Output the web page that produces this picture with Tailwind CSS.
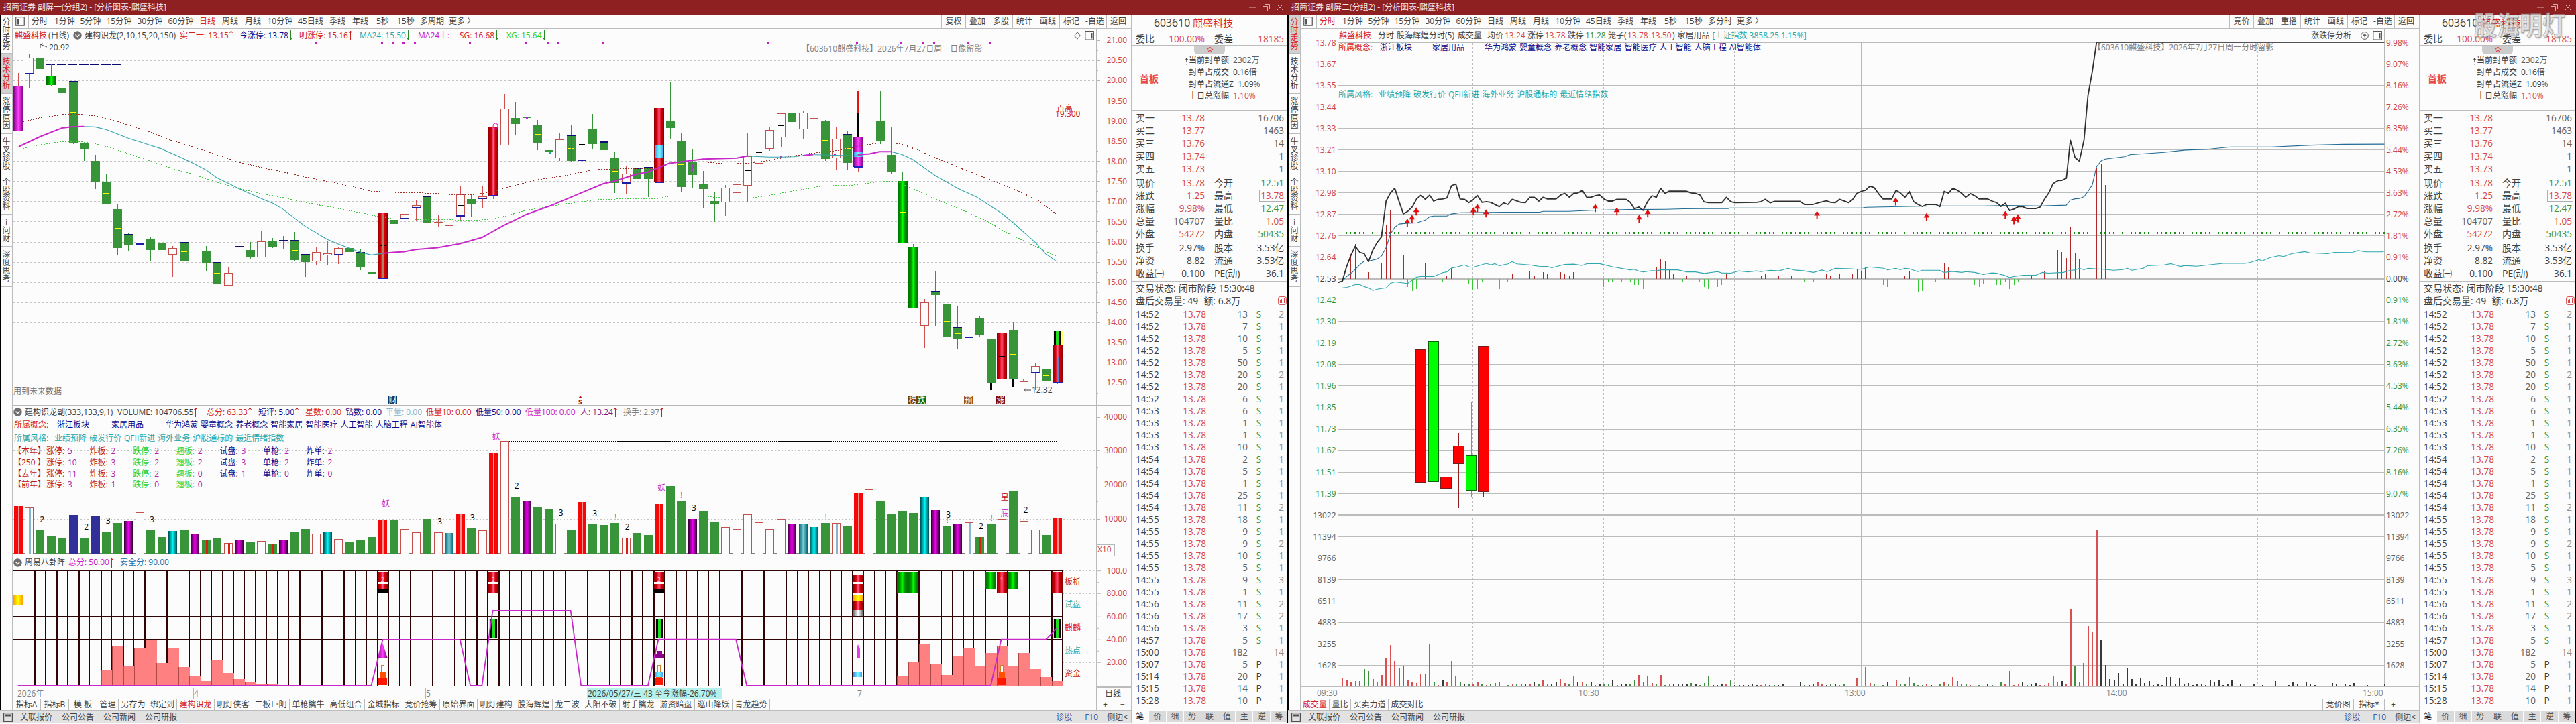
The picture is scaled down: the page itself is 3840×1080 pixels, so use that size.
<!DOCTYPE html>
<html lang="zh-CN">
<head>
    <meta charset="UTF-8">
    <meta name="viewport" content="width=device-width, initial-scale=1.0">
    <title>招商证券</title>
    <script src="https://cdn.jsdelivr.net/npm/@tailwindcss/browser@4"></script>
</head>
<body class="bg-black">
    <div id="desk" class="flex w-[3840px] h-[1080px] overflow-hidden text-[12px] leading-none text-[#404040] whitespace-nowrap font-['Open_Sans','Noto_Sans_CJK_SC',sans-serif]"></div>

    <script>
        // ---------- small builders ----------
        const txt = (x, y, s, cls = 'fill-[#404040]', anchor = 'start') =>
            `<text x="${x}" y="${y + 4.4}" class="${cls}" text-anchor="${anchor}" xml:space="preserve">${s}</text>`;
        const rect = (x, y, w, h, fill, extra = '') => `<rect x="${x}" y="${y}" width="${w}" height="${h}" fill="${fill}" ${extra}/>`;
        const line = (x1, y1, x2, y2, c, w = 1, dash = '') =>
            `<line x1="${x1}" y1="${y1}" x2="${x2}" y2="${y2}" stroke="${c}" stroke-width="${w}" ${dash ? `stroke-dasharray="${dash}"` : ''}/>`;
        const poly = (pts, c, w = 1, dash = '') =>
            `<polyline points="${pts}" fill="none" stroke="${c}" stroke-width="${w}" stroke-linejoin="round" ${dash ? `stroke-dasharray="${dash}"` : ''}/>`;

        const up = `<svg class="w-[7px] h-[15px]" viewBox="0 0 7 15"><path d="M3.5 15V1M1.5 4L3.5 1L5.5 4" fill="none" stroke="#d02020"/></svg>`;
        const down = `<svg class="w-[7px] h-[15px]" viewBox="0 0 7 15"><path d="M3.5 0V14M1.5 11L3.5 14L5.5 11" fill="none" stroke="#2a8a2a"/></svg>`;
        const knob = `<svg class="w-[13px] h-[13px]" viewBox="0 0 13 13"><circle cx="6.5" cy="6.5" r="6.2" fill="#6e6e6e"/><path d="M3.5 5.5L6.5 8.5L9.5 5.5" fill="none" stroke="#fff" stroke-width="1.3"/></svg>`;
        const dock = `<svg class="w-[14px] h-[14px]" viewBox="0 0 14 14"><path d="M.75 .75h12.5v12.5H.75z" fill="none" stroke="#555" stroke-width="1.3"/><path d="M9 3h2.5v8.5H9z" fill="#555"/></svg>`;

        // items: [left, class, html]; each one is as wide as the distance to the next
        function cells(items, start, end) {
            return items.map((it, i) => {
                const next = i + 1 < items.length ? items[i + 1][0] : end;
                const pad = i === 0 ? it[0] - start : 0;
                return `<span class="shrink-0 flex items-center ${it[1]}" style="width:${next - it[0]}px;margin-left:${pad}px">${it[2]}</span>`;
            }).join('');
        }

        const RED = 'text-[#d82020]', BLUE = 'text-[#0a0a8c]', TEAL = 'text-[#22a8ac]', MAG = 'text-[#c818c8]', LIME = 'text-[#28d028]';

        const gradients = `<defs>
            <linearGradient id="gR"><stop offset="0" stop-color="#8c0000"/><stop offset=".3" stop-color="#d80008"/><stop offset=".5" stop-color="#ff5a8c"/><stop offset=".7" stop-color="#d80008"/><stop offset="1" stop-color="#8c0000"/></linearGradient>
            <linearGradient id="gP"><stop offset="0" stop-color="#780078"/><stop offset=".5" stop-color="#ff40ff"/><stop offset="1" stop-color="#780078"/></linearGradient>
            <linearGradient id="gG"><stop offset="0" stop-color="#007000"/><stop offset=".25" stop-color="#009000"/><stop offset=".5" stop-color="#00ff00"/><stop offset=".75" stop-color="#009000"/><stop offset="1" stop-color="#007000"/></linearGradient>
            <linearGradient id="gC"><stop offset="0" stop-color="#004c50"/><stop offset=".5" stop-color="#00f4f4"/><stop offset="1" stop-color="#004c50"/></linearGradient>
            <linearGradient id="gT"><stop offset="0" stop-color="#006468"/><stop offset=".5" stop-color="#78c8d8"/><stop offset="1" stop-color="#006468"/></linearGradient>
            <linearGradient id="gV"><stop offset="0" stop-color="#2c002c"/><stop offset=".5" stop-color="#f000f0"/><stop offset="1" stop-color="#2c002c"/></linearGradient>
            <linearGradient id="gY"><stop offset="0" stop-color="#ff9c00"/><stop offset=".5" stop-color="#ffff00"/><stop offset="1" stop-color="#ff9c00"/></linearGradient>
            <linearGradient id="gS"><stop offset="0" stop-color="#606060"/><stop offset=".5" stop-color="#ffffff"/><stop offset="1" stop-color="#606060"/></linearGradient>
            <linearGradient id="gB"><stop offset="0" stop-color="#4890f0"/><stop offset=".5" stop-color="#70ffff"/><stop offset="1" stop-color="#4890f0"/></linearGradient>
        </defs>`;

        // ---------- daily chart ----------
        const X = v => +(v / 1.8667).toFixed(1);
        const Y = v => +(v / 2.6133).toFixed(1);
        const V = v => +(590 + v / 3).toFixed(1);
        const col = i => 26.5 + 16.48 * i;
        const path = (s, fy) => s.trim().split(/\s+/).map(p => { const [a, b] = p.split(','); return X(a) + ',' + fy(b); }).join(' ');

        // high, top, bottom, low, kind, middle mark. kinds: r/g plain, b = opening edge marked, R/P/G = shaded
        const days = [
            [285,335,511,511,'P',424],[209,225,287,345,'rb'],[168,225,269,298,'g'],[251,298,332,336,'G'],[332,345,361,416,'g'],
            [316,316,557,561,'gB',437],[555,559,580,627,'g'],[603,627,711,738,'g',670],[679,711,794,798,'g',753],[794,815,967,996,'g',891],
            [908,912,954,977,'gb'],[859,917,951,998,'rb'],[925,930,975,1019,'g'],[938,946,975,1009,'gb'],[959,967,992,1079,'r'],
            [896,943,1019,1040,'gb',981],[946,977,980,1004,'gb'],[959,980,1025,1056,'g'],[1022,1022,1105,1129,'gb',1064],[1040,1064,1111,1111,'r'],
            [959,959,963,1014,'gb'],[943,975,1001,1009,'g'],[899,941,1003,1003,'r'],[928,941,962,967,'g'],[920,936,940,970,'gb'],
            [904,936,1014,1019,'gb',975],[990,990,1022,1079,'gb'],[964,983,1018,1036,'rb'],[938,990,994,1036,'r'],[962,967,992,1030,'rb'],
            [962,967,983,1004,'g'],[970,983,1040,1053,'gb',1011],[1045,1061,1069,1110,'g'],[831,831,1086,1086,'R',957],[836,857,873,925,'g'],
            [813,834,851,881,'rb'],[781,802,809,862,'rb'],[742,766,868,893,'gb',819],[836,866,869,883,'rb'],[841,860,878,899,'r'],
            [724,760,841,857,'rb',800],[754,776,794,847,'g'],[724,766,775,810,'rb'],[497,497,762,775,'R',630],[366,424,566,566,'r',495],
            [397,460,483,525,'g'],[361,455,459,486,'gb'],[468,489,557,585,'g',524],[494,585,593,624,'g'],[517,546,616,626,'r'],
            [486,525,627,630,'gB',578],[444,502,625,694,'rb',562],[444,502,562,580,'g',534],[549,549,585,682,'gB'],[591,617,713,753,'g',667],
            [648,679,713,755,'rb'],[648,656,698,775,'gb'],[650,650,698,768,'gB'],[421,421,711,721,'R'],[318,470,499,541,'g'],
            [517,549,729,750,'g',641],[580,629,682,734,'gb'],[666,716,737,810,'g'],[747,783,794,865,'g'],[721,734,787,841,'rb'],
            [645,721,752,752,'r'],[517,611,723,787,'r',664],[517,549,636,664,'r',594],[494,507,580,588,'r'],[442,444,535,572,'r',489],
            [374,439,476,494,'gb'],[431,439,503,544,'r'],[410,460,472,494,'r'],[468,473,619,627,'g',547],[497,541,616,664,'rb'],
            [510,523,635,664,'gb',578],[533,533,651,671,'P'],[311,447,510,569,'rb'],[353,470,549,561,'g',510],[497,604,669,679,'g',638],
            [672,706,949,949,'G',826],[951,964,1202,1202,'G',1082],[1166,1181,1269,1356,'r',1224],[1056,1134,1150,1270,'gB'],[1178,1186,1315,1320,'g',1252],
            [1194,1276,1322,1359,'gb',1299],[1202,1241,1316,1367,'rb',1279],[1231,1239,1304,1315,'gb',1271],[1294,1320,1492,1492,'g',1407],[1296,1296,1478,1518,'R',1388],
            [1257,1286,1477,1477,'gb',1381],[1401,1469,1487,1525,'r'],[1414,1427,1452,1520,'rb'],[1367,1440,1487,1496,'g',1464],[1343,1343,1492,1497,'R',1391]
        ];

        function candle(d, i) {
            const [h, t, b, l, k, m] = d, c = Math.round(col(i)) + .5, y = Y(t), hh = Math.max(Y(b) - y, 1.5);
            const shaded = 'RPG'.includes(k[0]), green = k[0] === 'g' || k[0] === 'G';
            let s = line(c, Y(h), c, Y(l), green ? '#389438' : '#d05050');
            if (shaded) s += rect(c - 7.5, y, 15, hh, `url(#g${k[0]})`);
            else if (green) s += rect(c - 6.5, y, 13, hh, '#389438');
            else s += rect(c - 6, y, 12, hh, '#fcfcfc', 'stroke="#c4504c"');
            if (k[1] === 'B') s += rect(c - 6.5, y, 13, 2.5, '#0c0c78');
            if (k[1] === 'b') s += green ? rect(c - 6.5, y, 13, 1.3, '#10106c') : rect(c - 6.5, Y(b) - .6, 13, 1.3, '#1c1ca0');
            if (k === 'R' || k === 'P') s += rect(c - 7, Y(b) - 1, 14, 1.5, '#2020c0');
            if (m) s += rect(c - 4.5, Y(m) - .5, 9, 1, green ? '#ffff00' : '#000');
            return s;
        }

        const sg = `63,475 80,470 111,459 142,454 173,447 203,444 234,447 264,452 295,461 326,474 400,506 478,548 540,573 600,602 664,632 725,652 787,670 848,690 910,706 971,725 1033,745 1095,750 1217,754 1250,759 1320,758 1371,748 1433,722 1494,701 1568,686 1600,677 1649,662 1700,659 1832,656 1865,636 1895,631 1960,631 2020,639 2080,636 2140,626 2200,609 2260,597 2330,587 2387,571 2430,560 2480,557 2510,562 2560,588 2640,637 2700,671 2768,707 2830,742 2890,783 2941,836`;
        const xg = `56,582 111,565 170,553 234,554 264,560 300,572 356,598 420,628 480,657 541,681 602,710 664,735 725,755 787,770 848,789 941,813 1003,829 1065,848 1100,854 1200,855 1320,859 1371,853 1410,841 1464,820 1530,804 1568,796 1610,788 1670,777 1832,774 1865,764 1960,765 2010,772 2090,772 2140,762 2210,744 2290,725 2380,721 2430,711 2480,706 2500,711 2540,735 2602,775 2665,811 2740,857 2800,906 2870,953 2940,1000`;
        const maDown = [
            `234,493 264,495 295,505 356,538 417,566 449,580 510,618 541,639 575,664 602,692 633,713 664,735 725,773 760,793 787,815 848,881 910,933 941,951 971,967 1003,983 1033,994 1065,988`,
            `2078,608 2140,612 2170,612 2210,611 2250,603 2270,603 2380,607 2400,603`,
            `2480,591 2510,602 2540,622 2602,684 2665,734 2720,770 2787,831 2820,869 2880,944 2910,990 2940,1019`
        ];
        const maUp = [
            `52,572 111,533 173,499 203,494 234,493`,
            `1065,988 1095,984 1125,981 1156,973 1217,966 1280,950 1341,926 1400,880 1464,836 1530,803 1568,781 1610,756 1679,716 1710,706 1771,679 1802,671 1863,636 1893,631 1957,620 2050,616 2078,608`,
            `2235,606 2262,602`, `2387,603 2420,600 2448,591 2480,591`
        ];

        function dailyChart() {
            let s = gradients + '<g shape-rendering="crispEdges">';
            for (let k = 0; k <= 16; k++) s += line(20, 90.5 + k * 30.06, 1634, 90.5 + k * 30.06, '#c4c4c4', 1, '3 3');
            for (let k = -1; k <= 16; k++) {
                s += line(1635, 90.5 + k * 30.06, 1640, 90.5 + k * 30.06, '#b8b8b8');
                s += line(1635, 105.5 + k * 30.06, 1637, 105.5 + k * 30.06, '#b8b8b8');
            }
            s += line(1634.5, 62, 1634.5, 604, '#b8b8b8');
            s += line(X(127), Y(252), X(340), Y(252), '#0c0c70', 1, '14 2.5');
            s += line(X(1403), Y(424), X(2940), Y(424), '#c03030', 1, '2 1');
            s += days.map(candle).join('');
            s += poly(path(sg, Y), '#a03028', 1, '2 2') + poly(path(xg, Y), '#48c848', 1, '2 2');
            s += line(col(58) + .5, 65, col(58) + .5, 161, '#a828a8', 1, '4 2');
            s += rect(col(58) - 6, Y(565), 13, 19, 'url(#gB)') + rect(col(58) - 4, Y(565), 9, 1, '#000');
            s += rect(col(76) - 1, Y(353), 2.5, Y(441) - Y(353), '#e81010') + rect(col(76) - 1, Y(441), 2.5, Y(533) - Y(441), '#000');
            s += rect(col(76) - 6, Y(591), 13, 8, 'url(#gB)') + rect(col(76) - 4, Y(591), 9, 1, '#000');
            s += rect(col(50), Y(533), 2, 36, '#c020c0') + rect(col(61), Y(640), 2, 12, '#a040c0') + rect(col(61) + 1, Y(655), 1, 10, '#20a0c0');
            s += rect(col(88) - .5, Y(1492), 2.5, 11, '#000') + rect(col(90) - .5, Y(1477), 2.5, 13, '#000');
            s += rect(col(94) - 7, Y(1291), 15, 20, '#ffff60') + rect(col(94) - 5, Y(1291), 11, 20, '#000') + rect(col(94) - 2, Y(1291), 4, 20, '#20e020');
            s += rect(col(94), Y(1391), 2, 38, '#6080d0') + rect(col(33), Y(835), 2, 95, '#b08060') + rect(col(91) - 1, Y(1476), 2, 4, '#40a0d0');
            s += rect(col(46) - .5, Y(458), 3, 3, '#c020e0') + rect(col(48), Y(590), 3, 3, '#20a0b0');
            s += rect(X(2170) - 1, Y(609), 3, 3, '#c818c8') + rect(X(2323) - 1, Y(600), 3, 3, '#c818c8');
            s += [878,1063,1093,1123,1155,1307,1462,1524,1554,1677,2138,2385,2508,2569,2600,2692,2754].map(v => rect(X(v) - 1.5, 62, 3, 3, '#c818c8')).join('');
            s += '</g>';
            s += maDown.map(p => poly(path(p, Y), '#30a4ac', 1.1)).join('') + maUp.map(p => poly(path(p, Y), '#c828c8', 2)).join('');
            s += `<ellipse cx="738.5" cy="188" rx="3.5" ry="4" fill="none" stroke="#c818c8"/>`;
            s += `<path d="M60 66V72M60 66L64 65M60 66L70 70" fill="none" stroke="#404040"/>` + txt(73, 70.5, '20.92');
            s += `<path d="M1526 582H1537M1526 582L1529 580M1526 582L1529 584" fill="none" stroke="#404040"/>` + txt(1538, 582, '12.32');
            s += txt(1195, 73, '【603610麒盛科技】2026年7月27日周一日像留影', 'fill-[#808080]');
            s += txt(1575, 161.5, '百高', 'fill-[#d02020]') + txt(1573, 169.5, '19.300', 'fill-[#d02020]');
            s += txt(20, 583.5, '用到未来数据', 'fill-[#707070]');
            for (let k = -1; k <= 16; k++) s += txt(1680, 90 + k * 30.06, (20.5 - k * .5).toFixed(2), 'fill-[#d04444]', 'end');
            const tags = [[579, '#0c3c64', '财'], [1354, '#6c4010', '榜'], [1367, '#107010', '跌'], [1437, '#a05010', '预'], [1485, '#780808', '涨']];
            tags.forEach(([x, c, t]) => s += rect(x, 590, 13, 13, c) + txt(x + .5, 596.5, t, 'fill-white'));
            s += `<path d="M862 594L865 590L868 594z" fill="#c01010"/>` + txt(865, 599, 's', 'fill-[#c01010] font-bold', 'middle');
            return s;
        }

        // volume bars: top of bar and kind
        const vols = '495R 502b 603g 630g 636g 534B 636g 541B 609g 570g 561P 522r 603g 633g 606C 600g 618P 645x 639g 660y 648P 654g 652r 663x 645P 609g 597g 619r 612C 643r 654g 645g 633g 558R 558g 598r 613r 552g 613r 615T 531R 594g 604r 258R 205r 453g 471P 498g 510g 574r 603g 477R 576g 579g 570g 637y 615g 624g 486R 405g 471g 552P 516g 567g 589r 598r 532r 568r 598r 553r 573P 576T 588C 570g 571b 585g 435R 421r 474g 528g 516g 525g 453C 513P 582g 573P 568b 633x 573g 553r 429g 562r 601r 624g 546R'.split(' ');

        function volumeChart() {
            let s = '<g shape-rendering="crispEdges">';
            [247, 400, 553].forEach(v => s += line(20, V(v), 1634, V(v), '#c4c4c4', 1, '2 3'));
            [96, 247, 400, 553].forEach(v => s += line(1635, V(v), 1640, V(v), '#b8b8b8') + line(1635, V(v + 76), 1637, V(v + 76), '#b8b8b8'));
            s += line(1634.5, 624, 1634.5, 829, '#b8b8b8') + line(20, 825.5, 1582, 825.5, '#808080');
            s += line(X(1403), V(205), X(2940), V(205), '#000', 1, '2 1');
            vols.forEach((v, i) => {
                const t = V(parseInt(v)), k = v.slice(-1), c = Math.round(col(i)) + .5, h = 826 - t;
                if ('rby'.includes(k)) s += rect(c - 6, t + .5, 12, h, '#fcfcfc', 'stroke="#c4504c"');
                else s += rect(c - 6.5, t, 13, h, { R: '#f40808', g: '#389438', x: '#389438', B: '#303098', P: 'url(#gV)', C: 'url(#gC)', T: 'url(#gT)' }[k]);
                if (k === 'R') s += rect(c - .5, t, 2, h, '#ff9090');
                if (k === 'b') s += rect(c - 1, t + 1, 3, h - 1, '#88b4cc');
                if ('xy'.includes(k)) s += rect(c - 1, t, 3, h, '#d82010');
            });
            s += rect(1634.5, 812.5, 27, 16.5, '#fcfcfc', 'stroke="#b8b8b8"') + '</g>';
            [[117,555,2],[240,588,2],[301,561,3],[423,555,3],[1224,564,3],[1315,546,3],[1438,405,2],[1561,525,3],[1655,528,3],[1746,588,2],[1931,504,3],[2639,534,3],[2730,585,2],[2854,513,2]]
                .forEach(([a, b, n]) => s += txt(X(a), V(b), n, 'fill-black', 'middle'));
            [[1713,546],[1896,447],[2298,546],[2636,558],[2759,549]].forEach(([a, b]) => s += txt(X(a), V(b), '!', 'fill-[#30a090]', 'middle'));
            [[1074,486,'妖'],[1381,186,'妖'],[1841,414,'妖'],[2796,528,'底']].forEach(([a, b, t]) => s += txt(X(a), V(b), t, 'fill-[#c818c8]', 'middle'));
            s += txt(X(2796), V(456), '皇', 'fill-[#c01010]', 'middle');
            [['40000', 622], ['30000', 672], ['20000', 723], ['10000', 774]].forEach(([t, y]) => s += txt(1680, y, t, 'fill-[#d04444]', 'end'));
            s += txt(1636, 820, 'X10', 'fill-[#d04444]');

            s += txt(21, 634, '所属概念:', 'fill-[#d82020]') + txt(85, 634, '浙江板块', 'fill-[#0a0a8c]') + txt(166, 634, '家居用品', 'fill-[#0a0a8c]');
            s += txt(247, 634, '华为鸿蒙 婴童概念 养老概念 智能家居 智能医疗 人工智能 人脑工程 AI智能体', 'fill-[#0a0a8c] [word-spacing:1px]');
            s += txt(21, 653.5, '所属风格:', 'fill-[#22a8ac]') + txt(81, 653.5, '业绩预降 破发行价 QFII新进 海外业务 沪股通标的 最近情绪指数', 'fill-[#22a8ac] [word-spacing:0.9px]');
            const names = [['涨停:', 'fill-[#c01818]'], ['炸板:', 'fill-[#c01818]'], ['跌停:', 'fill-[#28d028]'], ['翘板:', 'fill-[#28d028]'], ['试盘:', 'fill-[#0a0a8c]'], ['单枪:', 'fill-[#0a0a8c]'], ['炸单:', 'fill-[#0a0a8c]']];
            const stats = [['【本年】', 5, 2, 2, 2, 3, 2, 2], ['【250 】', 10, 3, 2, 2, 3, 2, 2], ['【去年】', 11, 3, 2, 0, 1, 0, 0], ['【前年】', 3, 1, 0, 0]];
            stats.forEach((r, j) => {
                const y = 673 + j * 16.6;
                s += txt(20, y, r[0], 'fill-[#c01818]');
                r.slice(1).forEach((n, i) => s += txt(69 + i * 64.6, y, names[i][0], names[i][1]) + txt(101 + i * 64.6, y, n, 'fill-[#b020b0]'));
            });
            return s;
        }

        function scoreChart() {
            const W = 15.4, L = i => col(i) - 7.5;
            let s = '<g shape-rendering="crispEdges">';
            const flow = '8:1227 9:1122 10:1210 11:1131 12:1093 13:1196 14:1131 15:1215 16:1257 17:1278 18:1185 19:1242 20:1269 21:1284 22:1290 23:1293 80:1257 81:1191 82:1110 83:1203 84:1251 85:1167 86:1129 87:1212 88:1152 89:1122 90:1209 91:1152 92:1224 93:1260 94:1278';
            for (let i = 0; i <= 94; i++) s += rect(Math.round(34.2 + 16.48 * i), 852, i % 2 ? 2 : 1, 171, '#300404');
            [785, 886, 991, 1093, 1195].forEach(v => s += rect(20, Math.round(V(v)) - 1, 1564, 1, '#300404') + line(1584, V(v), 1634, V(v), '#c4c4c4', 1, '2 3'));
            flow.split(' ').forEach(p => { const [i, t] = p.split(':'), x = Math.round(col(+i) - 7.7); s += rect(x, V(t), 17, V(1300) - V(t), '#ff8080') + rect(x, V(t), 1, V(1300) - V(t), '#b04848'); });
            s += line(20, V(1300), 1584, V(1300), '#c07070');
            // signal blocks: column, top, bottom, fill
            [[33,789,864,'url(#gR)'],[33,864,886,'#000'],[43,789,886,'url(#gR)'],[58,789,864,'url(#gR)'],[58,864,886,'#000'],[76,804,886,'url(#gR)'],
             [76,891,921,'url(#gY)'],[76,921,960,'url(#gR)'],[76,960,987,'url(#gS)'],[80,789,886,'url(#gG)'],[81,789,886,'url(#gG)'],[88,789,867,'url(#gG)'],
             [90,789,867,'url(#gG)'],[89,789,886,'url(#gR)'],[94,789,886,'url(#gR)']].forEach(([i, a, b, f]) => s += rect(L(i), V(a), W, V(b) - V(a), f));
            s += rect(20, V(891), 14, 16, 'url(#gY)');
            [33, 43, 58, 76].forEach(i => s += rect(L(i), V(835), W, 2.5, '#fff'));
            [43, 58, 94].forEach(i => s += rect(L(i) + 1, V(999), 13, 29, '#e8e040') + rect(L(i) + 3, V(999), 10, 29, '#000') + rect(L(i) + 6, V(999), 4, 29, '#20e020'));
            [33, 58, 89].forEach(i => {
                s += rect(L(i) + 5.5, V(1207), 4, 10, '#fff', 'stroke="#d08020"');
                s += i === 58 ? rect(L(i) + 1, V(1236), 13, 8, 'url(#gB)') + rect(L(i) + 3, V(1260), 9, 2, '#ff5000') : rect(L(i) + 3, V(1236), 9, 10, '#ff5000');
                s += rect(L(i) + 1, V(1266), 13, 10, '#ff1800');
            });
            s += rect(L(76) + 1, V(1236), 13, 8, 'url(#gB)');
            s += rect(L(58), V(1158), W, 6, '#8c008c') + rect(L(58) + 4, V(1143), 8, 6, '#8c008c') + '</g>';
            s += `<path d="M${col(33)} 959L${col(33) + 7.5} 982H${col(33) - 7.5}z" fill="url(#gP)"/><path d="M${col(76)} 961L${col(76) + 3} 968V982H${col(76) - 2}V968z" fill="#e838e8"/>`;
            s += poly(path('50,1299 1033,1299 1065,1092 1280,1092 1309,1299 1341,1299 1371,963 1588,963 1617,1299 1803,1299 1832,1091 2048,1091 2078,1299 2757,1299 2786,1091 2911,1091 2940,1043', V), '#c828c8', 1.8);
            [[33, '2'], [43, '2'], [58, '2'], [89, '1']].forEach(([i, t]) => s += `<text x="${col(i)}" y="868" font-size="9" fill="#ffd0e0" text-anchor="middle">${t}</text>`);
            [['板析', 868, 'fill-[#c82020]'], ['试盘', 902, 'fill-[#22a8ac]'], ['麒麟', 937, 'fill-[#e02020]'], ['热点', 971, 'fill-[#22a8ac]'], ['资金', 1005, 'fill-[#c01818]']].forEach(([t, y, c]) => s += txt(1587, y, t, c));
            [['100.0', 785], ['80.00', 886], ['60.00', 991], ['40.00', 1093], ['20.00', 1195]].forEach(([t, v]) => {
                s += line(1636, V(v), 1641, V(v), '#b8b8b8') + line(1636, V(v + 51), 1638, V(v + 51), '#b8b8b8') + txt(1680, V(v) - .5, t, 'fill-[#d04444]', 'end');
            });
            s += `<path d="M1635 829V1025H1686" fill="none" stroke="#bcbcbc" stroke-width="2"/>`;
            return s;
        }

        // ---------- intraday chart ----------
        const price = `139,1101 151,1096 163,1040 175,996 187,960 200,984 212,989 224,1020 236,975 248,945 260,924 273,784 285,752 297,734 309,785 321,834 333,824 346,806 358,775 370,761 382,777 394,761 405,784 418,777 430,776 442,772 455,724 467,718 479,776 491,777 503,790 515,779 527,762 540,789 552,786 564,789 588,806 600,791 612,797 624,777 648,789 661,790 673,769 685,769 698,784 710,769 722,776 746,776 758,761 770,754 783,769 795,754 807,752 819,742 831,769 843,769 855,763 867,760 879,776 891,784 903,784 915,777 940,777 952,788 964,814 976,807 988,820 1001,785 1013,763 1025,769 1037,734 1049,754 1061,745 1108,745 1122,752 1134,754 1146,760 1158,787 1170,790 1207,790 1220,769 1232,786 1243,790 1304,789 1316,786 1328,777 1342,791 1354,785 1425,785 1437,797 1461,797 1475,791 1498,783 1510,789 1523,790 1535,777 1560,790
            1571,778 1583,754 1595,746 1607,742 1619,726 1631,731 1644,756 1656,776 1680,776 1692,742 1704,752 1717,769 1729,747 1741,786 1753,797 1765,805 1778,797 1803,797 1814,806 1826,746 1838,753 1850,734 1863,742 1875,754 1886,769 1899,755 1911,763 1923,776 1947,776 1959,784 1972,790 1984,805 1996,792 2008,821 2020,815 2032,806 2045,806 2056,813 2081,813 2093,807 2105,777 2117,752 2129,716 2142,704 2154,703 2166,695 2177,547 2190,614 2202,628 2215,546 2226,372 2238,280 2250,164 3051,164`;
        const avg = `151,1096 163,1078 180,1060 200,1032 212,1018 224,1018 248,1010 260,998 273,966 285,912 297,886 309,873 333,870 358,869 382,858 394,845 405,842 442,842 455,834 479,829 600,827 700,827 710,824 780,824 843,820 950,817 1050,816 1100,814 1225,813 1230,811 1598,811 1608,808 1728,805 1818,803 1938,803 1998,801 2098,803 2166,800 2177,780 2190,775 2202,774 2215,767 2226,746 2238,721 2250,650 2263,627 2274,620 2328,611 2343,603 2438,594 2498,585 2558,582 2623,573 2738,573 2848,566 2938,563 3051,562`;
        const index = `151,1122 165,1120 187,1109 200,1109 212,1117 224,1122 236,1132 248,1127 273,1122 285,1104 297,1099 333,1105 358,1080 370,1078 405,1078 430,1063 442,1060 455,1045 467,1042 491,1033 503,1040 515,1042 552,1027 564,1033 576,1028 588,1036 612,1029 624,1020 637,1029 673,1033 698,1038 722,1039 734,1044 770,1031 795,1030 819,1035 831,1028 867,1028 903,1040 952,1052 964,1050 976,1057 988,1060 1013,1055 1025,1056 1037,1052 1085,1052 1110,1060 1134,1060 1158,1066 1195,1059 1207,1064 1232,1065 1255,1056 1280,1060 1304,1056 1316,1059 1342,1054 1366,1056 1391,1046 1410,1053 1437,1056 1462,1062 1486,1053 1500,1059 1523,1046 1568,1048
            1583,1050 1598,1049 1619,1041 1658,1046 1668,1052 1692,1046 1704,1052 1717,1046 1729,1048 1753,1059 1765,1054 1813,1054 1826,1062 1850,1058 1875,1062 1886,1059 1911,1062 1935,1070 1959,1064 1972,1065 1984,1070 1996,1074 2008,1082 2020,1078 2045,1073 2081,1073 2098,1062 2117,1065 2158,1062 2177,1054 2190,1053 2202,1046 2215,1052 2226,1046 2268,1050 2298,1054 2323,1051 2336,1046 2348,1054 2380,1046 2392,1036 2438,1033 2458,1028 2482,1039 2496,1035 2528,1038 2608,1026 2663,1027 2678,1023 2702,1012 2711,1017 2733,1004 2758,997 2770,1000 2793,989 2830,981 2843,986 2893,989 2913,984 2963,983 2978,977 2998,982 3043,982 3051,979`;
        const sticks = `175:990 187:951 200:972 212:980 224:1061 236:1061 248:1069 260:1023 273:878 285:821 297:844 309:923 321:996 370:1060 382:1027 394:1027 405:1060 442:1077 455:1045 467:1018 624:1069 637:1069 648:1069 673:1055 685:1077 710:1060 722:1069 758:1060 770:1069 783:1077 795:1061 807:1061 819:1061 1013:1055 1025:1040 1037:1011 1049:1019 1061:1048 1073:1069 1085:1061 1110:1077 1220:1069 1232:1077 1316:1077 1328:1069 1352:1077 1366:1077 1401:1077 1498:1069 1510:1077 1523:1077 1535:1069 1571:1069 1583:1048 1595:1055 1607:1040 1619:1019 1631:1041 1716:1077 1729:1055 1826:1027 1838:1040 1850:1019 1862:1026 1875:1032 2069:1077 2105:1056 2117:1027 2129:990 2142:975 2153:983 2166:1006 2177:883 2190:985 2202:1011 2215:936 2226:774 2238:826 2250:655 2263:640 2275:721 2288:891 2299:983
            333:1118 346:1134 358:1126 430:1098 503:1104 515:1132 527:1127 540:1098 576:1104 588:1126 612:1098 831:1098 879:1118 891:1098 903:1098 915:1098 928:1098 952:1098 964:1110 976:1110 988:1126 1098:1098 1146:1098 1158:1118 1170:1126 1183:1118 1195:1118 1207:1110 1280:1104 1437:1098 1449:1098 1462:1098 1656:1110 1668:1118 1680:1132 1753:1139 1765:1134 1778:1110 1789:1134 1802:1098 1886:1105 1910:1110 1923:1118 1935:1104 1959:1110 1972:1110 1984:1110 1996:1098 2008:1126 2020:1110 2032:1098 2056:1104`;
        const minuteVol = `12r 9r 6r 8r 8g 26g 23g 11r 7r 17r 42r 62r 38r 27g 30g 10r 7r 5r 18r 19g 63r 7g 2r 9k 6r 38r 16r 6g 3k 3g 3r 6r 4g 2r 3g 5g 6g 1r 2g 4r 3g 3g 3k 3r 6k 4g 9r 3g 3k 6k 11r 5r 4g 15r 7k 6r 4g 7k 2r 4k 4g 4g 10k 2r 3k 4k 4g 10g
            17r 6g 16r 5r 4g 17r 2g 3r 3k 3k 4k 3k 5g 3k 2g 5g 16g 2k 2k 3k 4r 10g 2k 2k 2k 2k 4k 2k 2r 3r 2k 2g 2k 4k 1k 1k 0k 6k 2g 2k 4k 6r 4r 2k 3g 3k 2r 3g 1g 1r 12r 1r 29r 5r 3g 1g 2g 7k 1k 10r 4g 4g 14r 5g 2g 2g 3r 2k 1k 3g 7r 3g 14r 8g 3g 3g 2r 1g 2g 1k 3k 2g 1g 6g 3r 23g 2r 4r 6k 2g 3k 5k 2r 2r 5r 16r 7r 8k 4r
            116r 31g 6g 35r 90r 81r 234r 70k 32k 11k 10k 20k 4k 27k 11k 3k 12k 5k 8k 2k 3k 2k 14k 14k 3k 13k 3k 5k 2k 3k 4k 2k 10k 7k 9k 2k 3k 10k 1k 3k 1k 1k 3k 1k 2k 1k 1k 8k 1k 1k 2k 7k 3k 1k 7k 4k 2k 1k 1k 1k 5k 3k 1k 4k 2k 5k 1k 1k 2k 1k 1k 0k 4k`;

        function minuteChart() {
            const ty = k => 63.5 + 32.03 * k;
            const left = '13.78 13.67 13.55 13.44 13.33 13.21 13.10 12.98 12.87 12.76 12.64 12.53 12.42 12.30 12.19 12.08 11.96 11.85 11.73 11.62 11.51 11.39 13022 11394 9766 8139 6511 4883 3255 1628'.split(' ');
            const right = '9.98% 9.07% 8.16% 7.26% 6.35% 5.44% 4.53% 3.63% 2.72% 1.81% 0.91% 0.00% 0.91% 1.81% 2.72% 3.63% 4.53% 5.44% 6.35% 7.26% 8.16% 9.07%'.split(' ').concat(left.slice(22));
            let s = '<g shape-rendering="crispEdges">';
            for (let k = 0; k < 30; k++) s += line(74, ty(k), 1634, ty(k), '#bcbcbc', k === 11 || k === 22 ? 2 : 1);
            s += line(19, 1024.5, 1686, 1024.5, '#bcbcbc');
            [275.5, 470.5, 665.5, 1055.5, 1250.5, 1445.5].forEach(x => s += line(x, 64, x, 1024, '#bcbcbc', 1, '3 3'));
            [74.5, 854.5, 1634.5].forEach(x => s += line(x, x === 1634.5 ? 42 : 64, x, 1024, '#b8b8b8'));
            for (let x = 79.5; x < 1635; x += 6.5) s += rect(x.toFixed(1), 346, 1.5, 3, '#189018');
            sticks.split(/\s+/).forEach(p => {
                const [a, b] = p.split(':').map(Number);
                s += line(X(a), Y(1086), X(a), Y(b), b < 1086 ? '#b02828' : '#38c838');
            });
            // sample candles: left, top, width, bottom, high, low
            [[190.5,521,15,719.5,521,765,1],[209.5,509,15,718.5,478,756,0],[227.5,711.5,16,728.5,632,767,1],[246.5,665.5,16,691.5,646,758,1],[265.5,679,15,731,600,741,0],[283.5,516.5,16,733.5,516,741,1]].forEach(([x, t, w, b, h, l, r]) => {
                s += line(x + w / 2, h, x + w / 2, l, r ? '#902020' : '#28d028') + rect(x, t, w, b - t, r ? '#ff0000' : '#00ff00', `stroke="${r ? '#702020' : '#106010'}"`);
            });
            minuteVol.split(/\s+/).forEach((v, i) => {
                const h = parseInt(v);
                if (h) s += rect((80 + 6.5 * i).toFixed(1), 1024 - h, 2, h, { r: '#d85050', g: '#409040', k: '#383838' }[v.slice(-1)]);
            });
            s += '</g>' + poly(path(index, Y), '#30a8b0', 1.1) + poly(path(avg, Y), '#206c94', 1.1) + poly(path(price, Y), '#303030', 1.8);
            [[332,852],[345,837],[357,808],[516,808],[527,795],[551,816],[855,795],[915,808],[977,837],[1001,816],[1472,822],[1691,770],[1777,830],[1996,822],[2020,843],[2031,835]].forEach(([a, b]) => {
                const x = X(a), y = Y(b);
                s += `<path d="M${x} ${y}l4.5 7h-3.5v5h-2v-5h-3.5z" fill="#e01010"/>`;
            });
            left.forEach((t, k) => s += txt(71.5, ty(k), t, k < 11 ? 'fill-[#d04444]' : k === 11 ? 'fill-[#404040]' : k < 22 ? 'fill-[#389438]' : 'fill-[#606060]', 'end'));
            right.forEach((t, k) => s += txt(1637, ty(k), t, k < 11 ? 'fill-[#d04444]' : k === 11 ? 'fill-[#404040]' : k < 22 ? 'fill-[#389438]' : 'fill-[#606060]'));
            s += txt(75, 71, '所属概念:', 'fill-[#d82020]') + txt(137, 71, '浙江板块', 'fill-[#0a0a8c]') + txt(215, 71, '家居用品', 'fill-[#0a0a8c]');
            s += txt(293, 71, '华为鸿蒙 婴童概念 养老概念 智能家居 智能医疗 人工智能 人脑工程 AI智能体', 'fill-[#0a0a8c] [word-spacing:1px]');
            s += txt(75, 141, '所属风格:', 'fill-[#22a8ac]') + txt(135, 141, '业绩预降 破发行价 QFII新进 海外业务 沪股通标的 最近情绪指数', 'fill-[#22a8ac] [word-spacing:0.9px]');
            s += txt(1200, 71, '【603610麒盛科技】2026年7月27日周一分时留影', 'fill-[#808080]');
            return s;
        }

        // ---------- quote panel ----------
        const ticks = '14:52,13,S,2 14:52,7,S,1 14:52,10,S,1 14:52,5,S,1 14:52,50,S,1 14:52,20,S,2 14:52,20,S,1 14:52,6,S,1 14:53,6,S,1 14:53,1,S,1 14:53,1,S,1 14:53,10,S,1 14:54,2,S,1 14:54,5,S,1 14:54,1,S,1 14:54,25,S,1 14:54,11,S,2 14:55,18,S,1 14:55,9,S,1 14:55,9,S,2 14:55,10,S,1 14:55,5,S,1 14:55,9,S,3 14:55,1,S,1 14:56,11,S,2 14:56,17,S,2 14:56,3,S,1 14:57,5,S,1 15:00,182,,14 15:07,5,P,1 15:14,20,P,1 15:15,14,P,1 15:28,10,P,1'.split(' ').map(t => t.split(','));
        const r = 'text-[#d84848]', g = 'text-[#389438]', n = 'text-[#404040]', m = 'text-[#606060]';
        const bids = [['买一', '13.78', '16706'], ['买二', '13.77', '1463'], ['买三', '13.76', '14'], ['买四', '13.74', '1'], ['买五', '13.73', '1']];
        const quote1 = [['现价', '13.78', r, '今开', '12.51', g], ['涨跌', '1.25', r, '最高', '13.78', r], ['涨幅', '9.98%', r, '最低', '12.47', g], ['总量', '104707', m, '量比', '1.05', r], ['外盘', '54272', r, '内盘', '50435', g]];
        const quote2 = [['换手', '2.97%', n, '股本', '3.53亿', n], ['净资', '8.82', n, '流通', '3.53亿', n], ['收益㈠', '0.100', n, 'PE(动)', '36.1', n]];
        const quoteRow = q => `
            <div class="flex h-[19px] items-center pl-1.5 pr-[5px]">
                <span class="w-[42px]">${q[0]}</span><span class="w-[61px] text-right text-[13.6px] ${q[2]}">${q[1]}</span>
                <span class="w-[48px] pl-3.5">${q[3]}</span><span class="ml-auto text-right text-[13.6px] ${q[5]} ${q[3] === '最高' ? 'border border-[#b0b0b0] h-[18px] leading-4 pl-px -mr-[2px] pr-px' : ''}">${q[4]}</span>
            </div>`;

        const panel = () => `
            <aside class="w-[234px] shrink-0 flex flex-col bg-[#fcfcfc] border-l border-[#bcbcbc] border-r border-r-black text-[14px]">
                <div class="h-[26px] border-b border-[#bcbcbc] flex items-center pl-[33px] gap-1 text-[15px]"><span class="text-[15.8px]">603610</span><span class="text-[#e02020]">麒盛科技</span></div>
                <div class="h-[20px] border-b border-[#bcbcbc] flex items-center pl-1.5 pr-[5px]">
                    <span class="w-[42px]">委比</span><span class="w-[61px] text-right text-[13.6px] text-[#d84848]">100.00%</span><span class="pl-3.5">委差</span><span class="ml-auto text-[13.6px] text-[#d84848]">18185</span>
                </div>
                <div class="h-[97px] border-b border-[#bcbcbc] flex flex-col items-center">
                    <div class="w-[46px] h-[13px] bg-[#cccccc] rounded-b-[6px] flex justify-center"><svg class="w-[11px] h-[12px]" viewBox="0 0 11 12"><path d="M1 6L5.5 2L10 6M3 9L5.5 6.5L8 9" fill="none" stroke="#e04848" stroke-width="1.2"/></svg></div>
                    <div class="flex w-full">
                        <div class="w-[79px] pt-[30px] pl-3 text-[14px] font-bold text-[#e84848]">首板</div>
                        <svg class="w-[6px] h-[12px] mt-1" viewBox="0 0 6 12"><path d="M3 8V1M3 10v1.5" stroke="#404040" stroke-width="1.3"/><path d="M1 4L3 1L5 4z" fill="#404040"/></svg>
                        <div class="text-[12px] leading-[17.8px]">
                            <div class="flex gap-1.5"><span>当前封单额</span><span class="text-[#606060]">2302万</span></div>
                            <div class="flex gap-1.5"><span>封单占成交</span><span>0.16倍</span></div>
                            <div class="flex gap-1.5"><span>封单占流通Z</span><span>1.09%</span></div>
                            <div class="flex gap-1.5"><span>十日总涨幅</span><span class="text-[#d84848]">1.10%</span></div>
                        </div>
                    </div>
                </div>
                <div class="h-[98px] border-b border-[#bcbcbc] pt-px">
                    ${bids.map(b => `<div class="flex h-[19px] items-center pl-1.5 pr-[5px]"><span class="w-[42px]">${b[0]}</span><span class="w-[61px] text-right text-[13.6px] text-[#d84848]">${b[1]}</span><span class="ml-auto text-[13.6px] text-[#606060]">${b[2]}</span></div>`).join('')}
                </div>
                <div class="h-[97px] border-b border-[#bcbcbc]">${quote1.map(quoteRow).join('')}</div>
                <div class="h-[60px] border-b border-[#bcbcbc]">${quote2.map(quoteRow).join('')}</div>
                <div class="h-[40px] border-b border-[#bcbcbc] pl-1.5">
                    <div class="h-[19px] flex items-center gap-1">交易状态: <span>闭市阶段</span><span class="text-[13.6px]">15:30:48</span></div>
                    <div class="h-[19px] flex items-center">盘后交易量: 49 <span class="ml-2">额: 6.8万</span>
                        <svg class="w-[13px] h-[13px] ml-auto mr-px" viewBox="0 0 13 13"><rect x=".6" y=".6" width="11.8" height="11.8" rx="2.5" fill="none" stroke="#d84848"/><path d="M3.5 10V6M5.5 10V4M7.5 10V7M9.5 10V3" stroke="#d84848"/></svg>
                    </div>
                </div>
                <div class="h-[600px] text-[13.6px]">
                    ${ticks.map(t => `
                    <div class="flex h-[18px] items-center pl-1.5 pr-[5px]">
                        <span class="w-[40px]">${t[0]}</span><span class="w-[65px] text-right text-[#d84848]">13.78</span>
                        <span class="w-[62px] text-right text-[#606060]">${t[1]}</span><span class="w-[33px] text-center ${t[2] === 'S' ? 'text-[#389438]' : 'text-[#404040]'}">${t[2]}</span><span class="ml-auto text-[#909090]">${t[3]}</span>
                    </div>`).join('')}
                </div>
                <div class="mt-auto h-[19px] flex gap-px text-[12px] pb-[2px]">
                    ${'笔价细势联值主逆筹'.split('').map((c, i) => `<span class="w-[25px] flex items-center justify-center ${i ? 'bg-[#dadada] text-[#505050]' : 'text-black'}">${c}</span>`).join('')}
                </div>
            </aside>`;

        // ---------- window frame ----------
        const sideTabs = [['分时走势', 58], ['技术分析', 60], ['涨停原因', 60], ['牛叉诊股', 60], ['个股资料', 60], ['i问财', 48], ['深度思考', 60]];

        function windowFrame(w) {
            const periods = [[47,'分时'],[81,'1分钟'],[119.5,'5分钟'],[158.5,'15分钟'],[204.5,'30分钟'],[250.5,'60分钟'],[297,'日线'],[331,'周线'],[365,'月线'],[398.5,'10分钟'],[444,'45日线'],[491,'季线'],[525,'年线'],[561,'5秒'],[592,'15秒'],[626,w.multi],[669,'更多 〉']];
            return `
            <section class="relative w-[1920px] h-[1080px] flex flex-col bg-[#fcfcfc]">
                <header class="h-[22px] shrink-0 bg-[#8f2022] text-[#f4e4e4] flex items-center px-[5px]">
                    <span>${w.title}</span>
                    <span class="ml-auto flex items-center gap-2.5 pr-0.5">
                        <svg class="w-[10px] h-[10px]" viewBox="0 0 10 10"><path d="M0 5h10" stroke="#d8b0b0"/></svg>
                        <svg class="w-[11px] h-[11px]" viewBox="0 0 11 11"><path d="M.5 3.5h7v7h-7zM3.5 3V.5h7v7H8" fill="none" stroke="#d8b0b0"/></svg>
                        <svg class="w-[10px] h-[10px]" viewBox="0 0 10 10"><path d="M.5 .5l9 9M9.5 .5l-9 9" stroke="#d8b0b0"/></svg>
                    </span>
                </header>
                <div class="flex h-[1057px]">
                    <div class="w-[1686px] flex flex-col">
                        <div class="flex h-[1037px]">
                            <nav class="w-[19px] shrink-0 border-l border-l-black border-r border-[#bcbcbc] flex flex-col">
                                ${sideTabs.map(([t, h], i) => `<div class="flex flex-col items-center justify-center border-b border-[#bcbcbc] leading-3 ${i === w.side ? 'bg-[#d2d0d0] text-[#e02020]' : ''}" style="height:${h}px">${t.split('').map(c => `<span>${c}</span>`).join('')}</div>`).join('')}
                            </nav>
                            <main class="flex-1 flex flex-col">
                                <div class="h-[21px] shrink-0 border-b border-[#bcbcbc] flex items-center">
                                    <span class="w-[24px] h-full flex items-center pl-1 border-r border-[#bcbcbc]"><svg class="w-[14px] h-[14px]" viewBox="0 0 14 14"><path d="M.75 .75h12.5v12.5H.75z" fill="none" stroke="#555" stroke-width="1.2"/><path d="M3 3h2v8.5H3z" fill="#555"/></svg></span>
                                    ${cells(periods.map(([x, t]) => [x, t === w.active ? RED : '', t]), 43, 720)}
                                    <span class="ml-auto h-full flex border-l border-[#bcbcbc]">
                                        ${[...w.tools, '统计', '画线', '标记', '-自选'].map(t => `<span class="w-[35px] border-l border-[#bcbcbc] first:border-l-0 flex items-center justify-center">${t}</span>`).join('')}
                                        <span class="w-[37px] border-l border-[#bcbcbc] flex items-center justify-center pr-0.5">返回</span>
                                    </span>
                                </div>
                                ${w.body}
                            </main>
                        </div>
                        <footer class="h-[20px] border-t border-[#bcbcbc] bg-[#e2e2e2] flex items-center pl-[5px]">
                            <svg class="w-[14px] h-[14px]" viewBox="0 0 14 14"><path d="M.6 .6h12.8v12.8H.6z" fill="none" stroke="#505050" stroke-width="1.2"/><path d="M2.5 2.5h9v3h-9z" fill="#505050"/></svg>
                            <span class="flex gap-3.5 ml-[11px]"><span>关联报价</span><span>公司公告</span><span>公司新闻</span><span>公司研报</span></span>
                            <span class="ml-auto flex pr-[5px]"><span class="text-[#3060b0] w-[43px]">诊股</span><span class="text-[#3060b0] w-[33px]">F10</span><span>侧边&lt;</span></span>
                        </footer>
                    </div>
                    ${panel()}
                </div>
                ${w.overlay || ''}
            </section>`;
        }

        const axisGap = '<span class="ml-auto w-[52px] h-full border-l border-[#b8b8b8] shrink-0"></span>';
        const tabs = [['指标A',42],['指标B',42],['模 板',42],['管理',32],['另存为',44],['绑定到',43],['建构识龙',56],['明灯侠客',56],['二板巨阴',56],['单枪擒牛',56],['高低组合',56],['金城指标',56],['竞价抢筹',56],['原始界面',56],['明灯建构',56],['股海辉煌',56],['龙二波',44],['大阳不破',56],['射手擒龙',56],['游资暗盘',56],['巡山降妖',56],['青龙趋势',56]];

        const leftBody = `
            <div class="h-[19px] shrink-0 flex items-center">
                ${cells([[22,RED,'麒盛科技'],[72,'','(日线)'],[109,'',knob],[126,'','建构识龙(2,10,15,20,150)'],[268,RED,'实二一: 13.15' + up],[357,BLUE,'今涨停: 13.78' + down],[446,RED,'明涨停: 15.16' + up],[536,TEAL,'MA24: 15.50' + down],[623,MAG,'MA24上: -'],[685,RED,'SG: 16.68' + down],[755,LIME,'XG: 15.64' + down]], 19, 840)}
                <span class="ml-auto flex items-center gap-1.5 pr-[3px]"><svg class="w-[10px] h-[12px]" viewBox="0 0 10 12"><path d="M5 .8L9.3 6L5 11.2L.7 6z" fill="none" stroke="#606060"/></svg>${dock}</span>
                <span class="w-[52px] h-full border-l border-[#b8b8b8] shrink-0"></span>
            </div>
            <svg class="w-[1667px] h-[542px] overflow-visible shrink-0" viewBox="19 62 1667 542">${dailyChart()}</svg>
            <div class="h-[20px] shrink-0 border-t border-[#b8b8b8] flex items-center">
                ${cells([[20,'',knob],[37,'','建构识龙副(333,133,9,1)'],[175,'','VOLUME: 104706.55' + up],[308,RED,'总分: 63.33' + up],[385,BLUE,'短评: 5.00' + up],[455,RED,'星数: 0.00'],[515,BLUE,'钻数: 0.00'],[575,'text-[#88b4cc]','平量: 0.00'],[635,RED,'低量10: 0.00'],[709,BLUE,'低量50: 0.00'],[783,MAG,'低量100: 0.00'],[865,'text-[#801880]','人: 13.24' + up],[929,'text-[#808080]','换手: 2.97' + up]], 19, 1000)}
                ${axisGap}
            </div>
            <svg class="w-[1667px] h-[205px] overflow-visible shrink-0" viewBox="19 624 1667 205">${volumeChart()}</svg>
            <div class="h-[19px] shrink-0 border-t border-[#b8b8b8] flex items-center">
                ${cells([[20,'',knob],[37,'','周易八卦阵'],[102,MAG,'总分: 50.00' + up],[179,'text-[#2070b0]','安全分: 90.00']], 19, 300)}
            </div>
            <svg class="w-[1667px] h-[178px] overflow-visible shrink-0" viewBox="19 848 1667 178">${scoreChart()}</svg>
            <div class="h-[16px] shrink-0 border-t border-[#b8b8b8] flex items-center text-[#808080]">
                ${cells([[26,'','2026年'],[288,'border-l border-[#b8b8b8] h-full','4'],[634,'border-l border-[#b8b8b8] h-full','5'],[875,'bg-[#b4f0ec] text-[#404040] h-full pl-px','2026/05/27/三 43 至今涨幅-26.70%'],[1077,'',''],[1277,'border-l border-[#b8b8b8] h-full','7']], 19, 1300)}
                <span class="ml-auto w-[52px] h-full border-l border-[#b8b8b8] flex items-center pl-3 text-[#404040]">日线</span>
            </div>
            <div class="h-[17px] shrink-0 border-t border-[#b8b8b8] flex">
                ${tabs.map(([t, w]) => `<span class="flex items-center justify-center border-r border-[#bcbcbc] ${t === '建构识龙' ? RED : ''}" style="width:${w}px">${t}</span>`).join('')}
                <span class="ml-auto w-[52px] flex border-l border-[#bcbcbc]"><span class="w-[26px] flex items-center justify-center border-r border-[#bcbcbc]">+</span><span class="flex-1 flex items-center justify-center">−</span></span>
            </div>`;

        const rightBody = `
            <div class="h-[19px] shrink-0 flex items-center">
                ${cells([[76,RED,'麒盛科技'],[134,'','分时'],[162,'','股海辉煌分时(5)'],[253,'','成交量'],[297,'','均价'],[323,'text-[#d84848]','13.24'],[357,'','涨停'],[383,'text-[#d84848]','13.78'],[417,'','跌停'],[443,'text-[#389438]','11.28'],[477,'','笼子('],[506,'text-[#d84848]','13.78'],[541,'text-[#d84848]','13.50'],[573,'',')'],[580.5,'','家居用品'],[632.5,TEAL,'[上证指数 3858.25 1.15%]']], 19, 800)}
                <span class="ml-auto flex items-center pr-[3px]">涨跌停分析<svg class="w-[12px] h-[12px] ml-3.5 mr-1.5" viewBox="0 0 12 12"><circle cx="6" cy="6" r="5.4" fill="none" stroke="#606060"/><path d="M6 3.5v5M3.8 5.8L6 3.2L8.2 5.8z" fill="#606060" stroke="#606060"/></svg>${dock}</span>
                <span class="w-[52px] h-full border-l border-[#b8b8b8] shrink-0"></span>
            </div>
            <svg class="w-[1667px] h-[964px] overflow-visible shrink-0" viewBox="19 62 1667 964">${minuteChart()}</svg>
            <div class="h-[16px] shrink-0 flex items-center text-[#808080]">
                ${cells([[43,'','09:30'],[433,'','10:30'],[830,'','13:00'],[1220,'','14:00'],[1602,'','15:00']], 19, 1640)}
            </div>
            <div class="h-[17px] shrink-0 border-t border-[#b8b8b8] flex">
                ${[['成交量', 43], ['量比', 32], ['买卖力道', 56], ['成交对比', 56]].map(([t, w], i) => `<span class="flex items-center justify-center border-r border-[#bcbcbc] ${i === 0 ? RED : ''}" style="width:${w}px">${t}</span>`).join('')}
                <span class="ml-auto w-[46px] border-l border-[#bcbcbc] flex items-center justify-center">竞价图</span><span class="w-[46px] border-l border-[#bcbcbc] flex items-center justify-center">指标*</span>
                <span class="w-[52px] flex border-l border-[#bcbcbc]"><span class="w-[26px] flex items-center justify-center border-r border-[#bcbcbc]">+</span><span class="flex-1 flex items-center justify-center">-</span></span>
            </div>`;

        const brand = `<div class="absolute left-[1768px] top-[19px] text-[34px] font-bold leading-[36px] scale-y-115 text-white/60 [-webkit-text-stroke:0.8px_#80808099] [text-shadow:1px_1px_2px_#00000055]">股海明灯</div>`;

        document.getElementById('desk').innerHTML =
            windowFrame({ title: '招商证券 副屏一(分组2) - [分析图表-麒盛科技]', side: 1, active: '日线', multi: '多周期', tools: ['复权', '叠加', '多股'], body: leftBody }) +
            windowFrame({ title: '招商证券 副屏二(分组2) - [分析图表-麒盛科技]', side: 0, active: '分时', multi: '多分时', tools: ['竞价', '叠加', '重播'], body: rightBody, overlay: brand });
    </script>
</body>
</html>
